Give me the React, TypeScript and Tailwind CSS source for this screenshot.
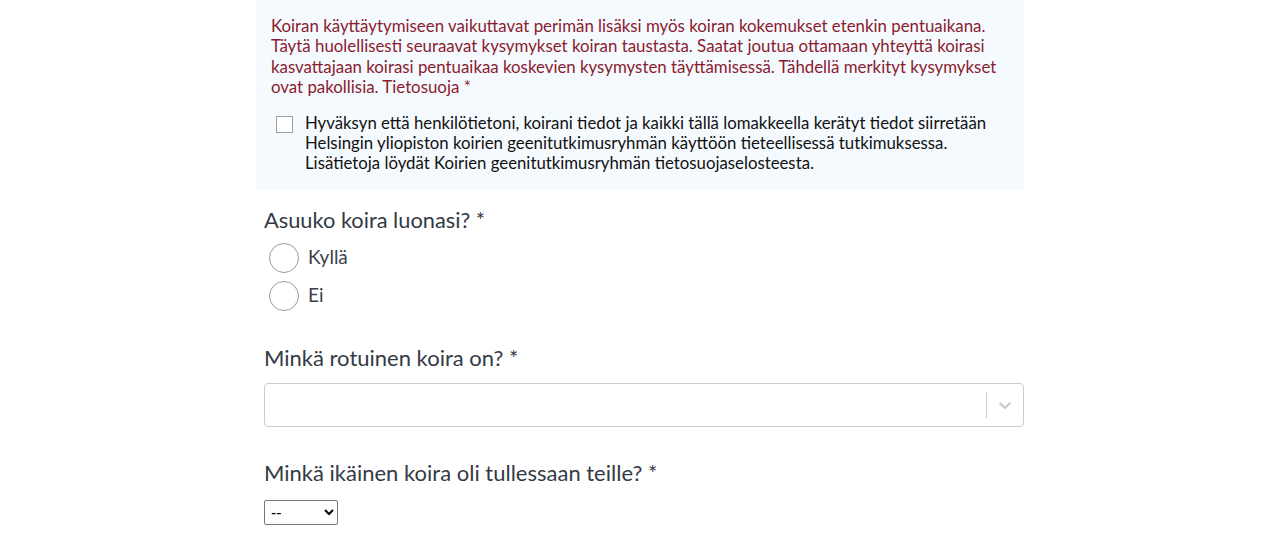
import React from 'react';

function Radio({ label }: { label: string }) {
  return (
    <label className="flex items-center gap-[9px] h-[38px] pl-[5px]">
      <span className="w-[30px] h-[30px] rounded-full border border-[#9a9a9a] bg-white shrink-0"></span>
      <span className="text-[19px] text-[#3a404a]">{label}</span>
    </label>
  );
}

export default function App() {
  return (
    <div className="min-h-[560px] bg-white" style={{ fontFamily: 'Lato, "Noto Sans", sans-serif' }}>
      <div className="w-[768px] mx-auto">
        <div className="bg-[#f5faff] px-[15px] pt-[16px] pb-[17px]">
          <p className="text-[16.85px] leading-[20.4px] text-[#8a1c2d]">
            Koiran käyttäytymiseen vaikuttavat perimän lisäksi myös koiran kokemukset etenkin pentuaikana.
            Täytä huolellisesti seuraavat kysymykset koiran taustasta. Saatat joutua ottamaan yhteyttä koirasi
            kasvattajaan koirasi pentuaikaa koskevien kysymysten täyttämisessä. Tähdellä merkityt kysymykset
            ovat pakollisia. Tietosuoja *
          </p>
          <div className="flex mt-[15px] pl-[5px]">
            <span className="w-[17px] h-[17px] mt-[3px] border border-[#a0a0a0] bg-white shrink-0"></span>
            <p className="ml-[12px] text-[16.8px] leading-[20px] text-[#111]">
              Hyväksyn että henkilötietoni, koirani tiedot ja kaikki tällä lomakkeella kerätyt tiedot siirretään
              <br />
              Helsingin yliopiston koirien geenitutkimusryhmän käyttöön tieteellisessä tutkimuksessa.
              <br />
              Lisätietoja löydät Koirien geenitutkimusryhmän tietosuojaselosteesta.
            </p>
          </div>
        </div>

        <div className="pl-[8px]">
          <div className="pt-[15px]">
            <h2 className="text-[21.8px] leading-[30px] text-[#333a45]">Asuuko koira luonasi? *</h2>
            <div className="mt-[4px]">
              <Radio label="Kyllä" />
              <Radio label="Ei" />
            </div>
          </div>

          <div className="pt-[28px]">
            <h2 className="text-[22px] leading-[30px] text-[#333a45]">Minkä rotuinen koira on? *</h2>
            <div className="mt-[10px] h-[44px] border border-[#cccccc] rounded-[4px] bg-white flex items-center justify-end">
              <span className="w-px h-[26px] bg-[#cccccc]"></span>
              <span className="w-[36px] flex justify-center">
                <svg width="20" height="20" viewBox="0 0 20 20" fill="#cccccc">
                  <path d="M4.516 7.548c0.436-0.446 1.043-0.481 1.576 0l3.908 3.747 3.908-3.747c0.533-0.481 1.141-0.446 1.574 0 0.436 0.445 0.408 1.197 0 1.615-0.406 0.418-4.695 4.502-4.695 4.502-0.217 0.223-0.502 0.335-0.787 0.335s-0.57-0.112-0.789-0.335c0 0-4.287-4.084-4.695-4.502s-0.436-1.17 0-1.615z" />
                </svg>
              </span>
            </div>
          </div>

          <div className="pt-[31px]">
            <h2 className="text-[22px] leading-[30px] text-[#333a45]">Minkä ikäinen koira oli tullessaan teille? *</h2>
            <select className="mt-[12px] w-[74px] h-[25px] border border-[#767676] rounded-[2px] bg-white text-[16px] text-black pl-[2px]" style={{ fontFamily: '"Liberation Sans", sans-serif' }} defaultValue="--">
              <option value="--">--</option>
            </select>
          </div>
        </div>
      </div>
    </div>
  );
}
